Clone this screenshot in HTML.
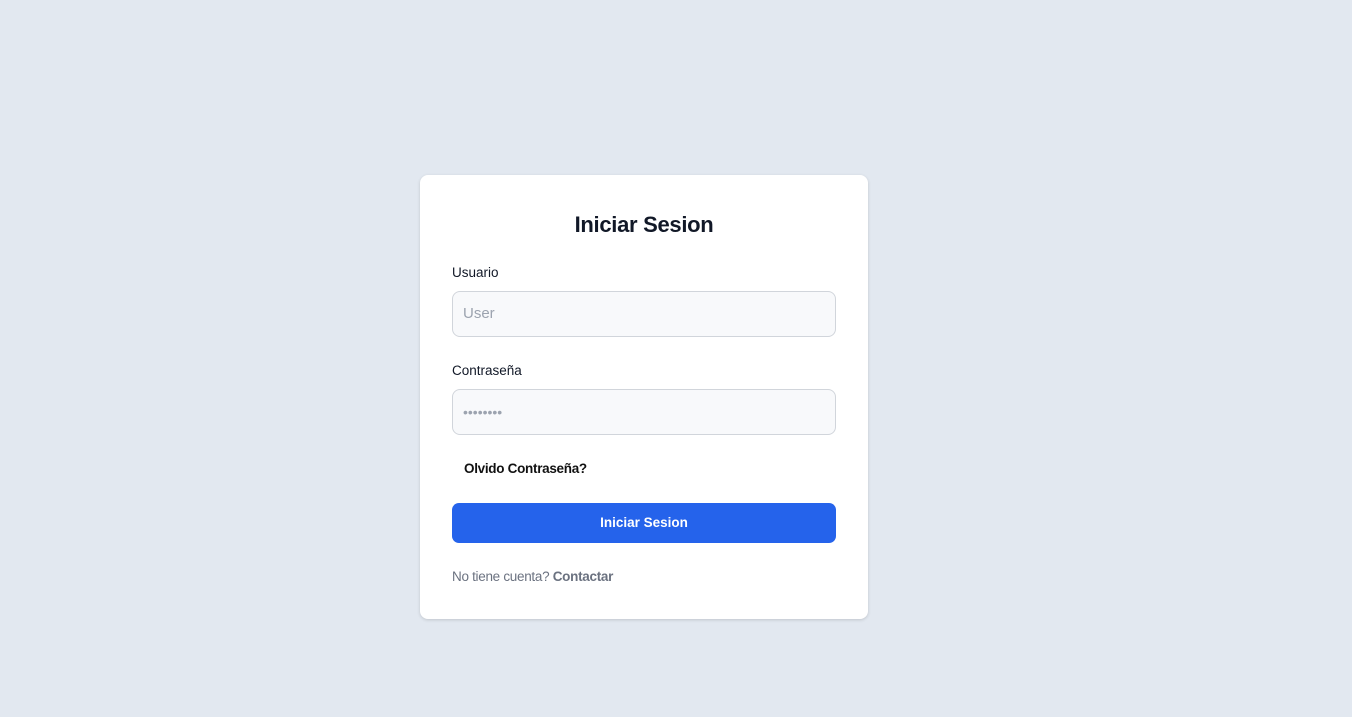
<!DOCTYPE html>
<html><head><meta charset="utf-8"><style>
*{box-sizing:border-box;margin:0;padding:0}
html,body{width:1352px;height:717px;background:#e2e8f0;font-family:"Liberation Sans",sans-serif;overflow:hidden}
.card{position:absolute;left:420px;top:175px;width:448px;height:444px;background:#fff;border-radius:8px;box-shadow:0 1px 3px rgba(0,0,0,.15)}
h1{position:absolute;left:0;width:448px;top:37px;text-align:center;font-size:22px;font-weight:bold;color:#111827;letter-spacing:-0.3px}
.lbl{position:absolute;left:32px;font-size:14px;color:#111827}
.in{position:absolute;left:32px;width:384px;height:46px;background:#f8f9fb;border:1px solid #d1d5db;border-radius:8px;padding-left:10px;line-height:44px;font-size:15px;color:#9ca3af}
.btn{position:absolute;left:32px;top:328px;width:384px;height:40px;background:#2563eb;border-radius:7px;color:#fff;font-weight:bold;font-size:13.5px;text-align:center;line-height:40px}
</style></head><body>
<div class="card">
<h1>Iniciar Sesion</h1>
<div class="lbl" style="top:90px;font-size:13.5px">Usuario</div>
<div class="in" style="top:116px">User</div>
<div class="lbl" style="top:188px;font-size:13.5px">Contraseña</div>
<div class="in" style="top:214px;font-size:14px;letter-spacing:0px">••••••••</div>
<div class="lbl" style="left:44px;top:286px;font-weight:bold;color:#111;font-size:13.5px;letter-spacing:-0.3px">Olvido Contraseña?</div>
<div class="btn">Iniciar Sesion</div>
<div class="lbl" style="top:394px;color:#6b7280;font-size:13.5px;letter-spacing:-0.3px">No tiene cuenta? <b style="color:#6b7280">Contactar</b></div>
</div>
</body></html>
